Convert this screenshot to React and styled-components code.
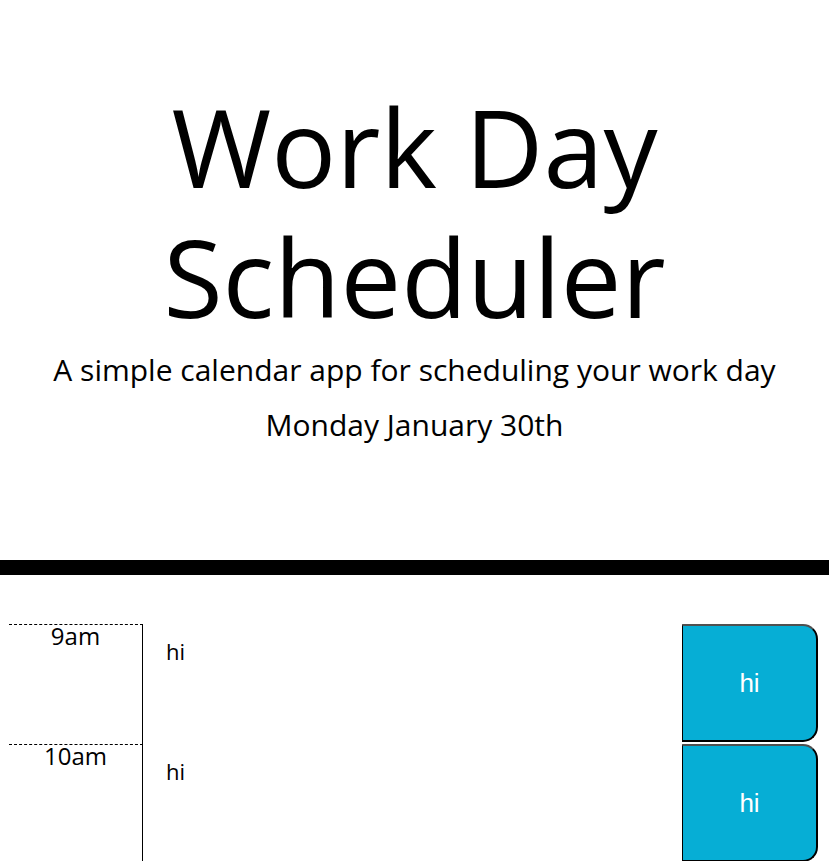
import styled, { createGlobalStyle } from "styled-components";

const GlobalStyle = createGlobalStyle`
  body {
    margin: 0;
    background: #ffffff;
    font-family: "Open Sans", sans-serif;
    color: #000000;
  }
`;

const Page = styled.div`
  width: 100%;
`;

const Jumbotron = styled.header`
  text-align: center;
  padding: 82px 0 117px;
  border-bottom: 15px solid #000000;
`;

const Title = styled.h1`
  margin: 0;
  font-size: 108px;
  font-weight: 400;
  line-height: 130px;
  padding: 0 150px;
`;

const Lead = styled.p`
  margin: ${(p) => p.$gap}px 0 0;
  font-size: 30px;
  line-height: 36px;
`;

const Schedule = styled.main`
  padding: 49px 11px 0 9px;
`;

const Row = styled.div`
  display: flex;
  height: 120px;
`;

const Hour = styled.div`
  width: 134px;
  flex-shrink: 0;
  box-sizing: border-box;
  border-top: 1px dashed #000000;
  border-right: 1px solid #000000;
  text-align: center;
  font-size: 24px;
  line-height: 22px;
`;

const Description = styled.div`
  flex: 1;
  padding: 12px 23px;
  font-size: 22px;
`;

const SaveBtn = styled.button`
  width: 136px;
  height: 118px;
  flex-shrink: 0;
  box-sizing: border-box;
  background-color: #06aed5;
  color: #ffffff;
  font-family: "Liberation Sans", Arial, sans-serif;
  font-size: 26px;
  border-style: solid;
  border-width: 2px 2px 2px 1px;
  border-color: #505050 #000000 #000000 #000000;
  border-top-right-radius: 15px;
  border-bottom-right-radius: 15px;
  cursor: pointer;
`;

const hours = ["9am", "10am"];

const App = () => {
  return (
    <Page>
      <GlobalStyle />
      <Jumbotron>
        <Title>Work Day Scheduler</Title>
        <Lead $gap={10}>A simple calendar app for scheduling your work day</Lead>
        <Lead $gap={19}>Monday January 30th</Lead>
      </Jumbotron>
      <Schedule>
        {hours.map((h) => (
          <Row key={h}>
            <Hour>{h}</Hour>
            <Description>hi</Description>
            <SaveBtn>hi</SaveBtn>
          </Row>
        ))}
      </Schedule>
    </Page>
  );
};

export default App;
